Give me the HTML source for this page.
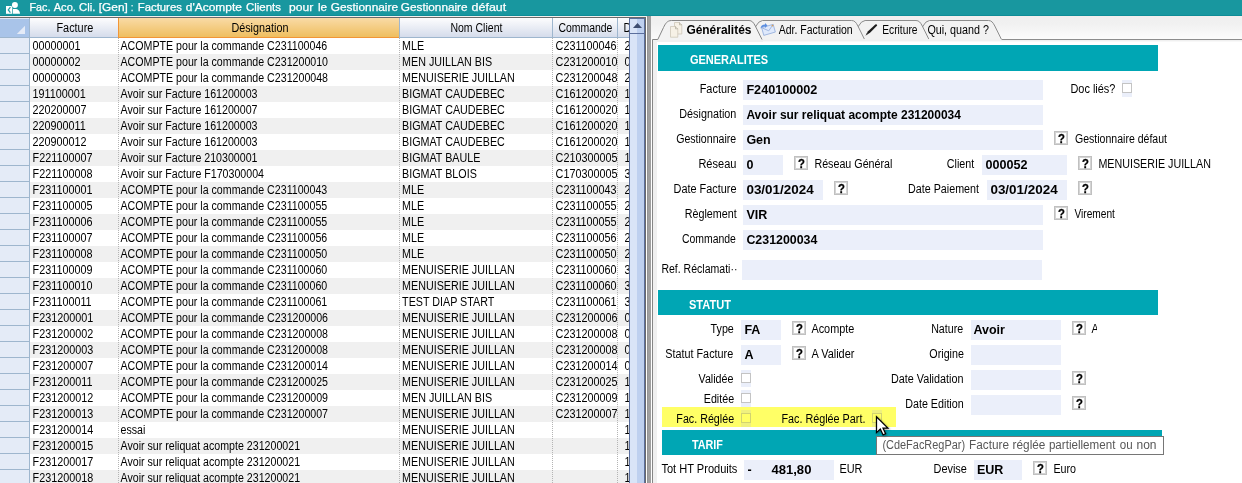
<!DOCTYPE html>
<html lang="fr"><head><meta charset="utf-8"><title>Fac. Aco. Cli.</title>
<style>
*{box-sizing:border-box;margin:0;padding:0}
html,body{width:1242px;height:483px;overflow:hidden;background:#fff}
body{position:relative;font-family:"Liberation Sans",sans-serif;font-size:12.5px;color:#000;line-height:16px}
.abs,.r,.f,.l,.q,.t,.b,.w,.cb,.h,.hd{position:absolute}
#title{left:0;top:0;width:1242px;height:16px;background:#18979f;border-bottom:1px solid #0e8c97;color:#fff;font-size:11.5px;line-height:16px;white-space:pre}
.tp{position:absolute;color:#575757;white-space:pre;transform-origin:0 0;height:16px}
.tt{position:absolute;color:#fff;font-size:11.5px;white-space:pre;transform-origin:0 0;height:16px;-webkit-text-stroke:.25px #fff}
/* text primitives */
.t,.b,.w{white-space:pre;transform-origin:0 0;height:16px}
.l{white-space:pre;transform-origin:100% 0;height:16px;text-align:right}
.b,.w{font-weight:bold}
.w{color:#fff}
/* grid */
.hd{top:18px;height:20px;background:linear-gradient(#fdfdfe,#d5dceb);border-bottom:1px solid #9eb6ce}
.hd.sel{background:linear-gradient(#f9dba6,#efbe5f);border-left:1px solid #f29536;border-bottom:1px solid #f29536}
.hb{position:absolute;top:18px;width:1px;height:20px;background:#9eb6ce}
.r{left:0;width:630px;height:16px;background:#fff}
.r.g{background:#f0f0f0}
.r .t{top:0}
.r .c1{left:32px;transform:translate(.6px,-.33px) scaleX(.8631)}.r .c2{left:120px;transform:translate(.5px,-.33px) scaleX(.851)}.r .c3{left:402px;transform:translate(.1px,-.33px) scaleX(.858)}.r .c4{left:555px;transform:translate(.6px,-.33px) scaleX(.8631)}.r .c5{left:624px;transform:translate(.6px,-.33px) scaleX(.8631)}
.vl{position:absolute;top:38px;width:1px;height:445px;background:repeating-linear-gradient(#b4b4b4 0 1px,rgba(255,255,255,0) 1px 2px)}
/* right */
#rp{left:651px;top:16px;width:591px;height:24px;background:linear-gradient(#f3eeec 0,#f3eeec 1px,#efefef 1px,#f1f1f1 8px,#fbfbfb 23px)}
.h{background:#00a6b4}
.f{background:#ebeffa;height:20px}
.q{width:14px;height:14px;border:1px solid #c0c0c0;box-shadow:inset 0 0 0 1px #d4d4d4;background:#fff}
.q::after{content:"?";position:absolute;left:3px;top:-2px;font-weight:bold;font-size:12.5px;line-height:16px;transform:translate(0,.5px) scaleX(.9);transform-origin:0 0;-webkit-text-stroke:.3px #000}
.cb{width:10px;height:17px;background:#ebeffa}
.cb i{position:absolute;left:0;top:3px;width:10px;height:10px;border:1px solid #c4c4c4;background:#fff}
</style></head><body><div id="app" style="position:absolute;left:0;top:0;width:1242px;height:483px;will-change:transform">
<div id="title" class="abs"></div>
<svg class="abs" style="left:0;top:0" width="24" height="16"><rect x="6" y="6" width="6.3" height="7.8" fill="#fff"/><path d="M10.4 7.2 L8.3 9.9 L10.4 12.6" stroke="#2aa0a8" stroke-width="1.3" fill="none"/><path d="M13 13.8 V9.1 H16.2 Q19.6 9.6 20 13.8Z" fill="#fff"/><circle cx="14.9" cy="4.9" r="3.4" fill="#18979f"/><circle cx="14.9" cy="4.9" r="3" fill="#fff"/></svg>
<div class="abs" style="left:0;top:16px;width:651px;height:1px;background:#f3eeec"></div>
<div class="abs" style="left:0;top:17px;width:646px;height:1px;background:#696969"></div>
<!-- header -->
<div class="hd" style="left:0;width:29px;background:#a9c4e9;border-top:1px solid #dfe9f9"></div>
<svg class="abs" style="left:16px;top:25px" width="10" height="10"><path d="M9 0.8 V9 H0.8Z" fill="#e4ebf7"/></svg>
<div class="hd" style="left:30px;width:88px"></div>
<div class="hd sel" style="left:118px;width:281px"></div>
<div class="hd" style="left:400px;width:152px"></div>
<div class="hd" style="left:553px;width:64px"></div>
<div class="hd" style="left:618px;width:11px"></div>
<div class="hb" style="left:29px"></div><div class="hb" style="left:399px"></div><div class="hb" style="left:552px"></div><div class="hb" style="left:617px"></div>
<div class="t" style="left:623px;top:19px;transform:translate(.4px,.67px) scaleX(.857)">D</div>
<div class="r" style="top:38px"><span class="t c1">00000001</span><span class="t c2">ACOMPTE pour la commande C231100046</span><span class="t c3">MLE</span><span class="t c4">C231100046</span><span class="t c5">2</span></div>
<div class="r g" style="top:54px"><span class="t c1">00000002</span><span class="t c2">ACOMPTE pour la commande C231200010</span><span class="t c3">MEN JUILLAN BIS</span><span class="t c4">C231200010</span><span class="t c5">0</span></div>
<div class="r" style="top:70px"><span class="t c1">00000003</span><span class="t c2">ACOMPTE pour la commande C231200048</span><span class="t c3">MENUISERIE JUILLAN</span><span class="t c4">C231200048</span><span class="t c5">2</span></div>
<div class="r g" style="top:86px"><span class="t c1">191100001</span><span class="t c2">Avoir sur Facture 161200003</span><span class="t c3">BIGMAT CAUDEBEC</span><span class="t c4">C161200020</span><span class="t c5">1</span></div>
<div class="r" style="top:102px"><span class="t c1">220200007</span><span class="t c2">Avoir sur Facture 161200007</span><span class="t c3">BIGMAT CAUDEBEC</span><span class="t c4">C161200020</span><span class="t c5">1</span></div>
<div class="r g" style="top:118px"><span class="t c1">220900011</span><span class="t c2">Avoir sur Facture 161200003</span><span class="t c3">BIGMAT CAUDEBEC</span><span class="t c4">C161200020</span><span class="t c5">1</span></div>
<div class="r" style="top:134px"><span class="t c1">220900012</span><span class="t c2">Avoir sur Facture 161200003</span><span class="t c3">BIGMAT CAUDEBEC</span><span class="t c4">C161200020</span><span class="t c5">1</span></div>
<div class="r g" style="top:150px"><span class="t c1">F221100007</span><span class="t c2">Avoir sur Facture 210300001</span><span class="t c3">BIGMAT BAULE</span><span class="t c4">C210300005</span><span class="t c5">1</span></div>
<div class="r" style="top:166px"><span class="t c1">F221100008</span><span class="t c2">Avoir sur Facture F170300004</span><span class="t c3">BIGMAT BLOIS</span><span class="t c4">C170300005</span><span class="t c5">3</span></div>
<div class="r g" style="top:182px"><span class="t c1">F231100001</span><span class="t c2">ACOMPTE pour la commande C231100043</span><span class="t c3">MLE</span><span class="t c4">C231100043</span><span class="t c5">2</span></div>
<div class="r" style="top:198px"><span class="t c1">F231100005</span><span class="t c2">ACOMPTE pour la commande C231100055</span><span class="t c3">MLE</span><span class="t c4">C231100055</span><span class="t c5">2</span></div>
<div class="r g" style="top:214px"><span class="t c1">F231100006</span><span class="t c2">ACOMPTE pour la commande C231100055</span><span class="t c3">MLE</span><span class="t c4">C231100055</span><span class="t c5">2</span></div>
<div class="r" style="top:230px"><span class="t c1">F231100007</span><span class="t c2">ACOMPTE pour la commande C231100056</span><span class="t c3">MLE</span><span class="t c4">C231100056</span><span class="t c5">2</span></div>
<div class="r g" style="top:246px"><span class="t c1">F231100008</span><span class="t c2">ACOMPTE pour la commande C231100050</span><span class="t c3">MLE</span><span class="t c4">C231100050</span><span class="t c5">2</span></div>
<div class="r" style="top:262px"><span class="t c1">F231100009</span><span class="t c2">ACOMPTE pour la commande C231100060</span><span class="t c3">MENUISERIE JUILLAN</span><span class="t c4">C231100060</span><span class="t c5">3</span></div>
<div class="r g" style="top:278px"><span class="t c1">F231100010</span><span class="t c2">ACOMPTE pour la commande C231100060</span><span class="t c3">MENUISERIE JUILLAN</span><span class="t c4">C231100060</span><span class="t c5">3</span></div>
<div class="r" style="top:294px"><span class="t c1">F231100011</span><span class="t c2">ACOMPTE pour la commande C231100061</span><span class="t c3">TEST DIAP START</span><span class="t c4">C231100061</span><span class="t c5">3</span></div>
<div class="r g" style="top:310px"><span class="t c1">F231200001</span><span class="t c2">ACOMPTE pour la commande C231200006</span><span class="t c3">MENUISERIE JUILLAN</span><span class="t c4">C231200006</span><span class="t c5">0</span></div>
<div class="r" style="top:326px"><span class="t c1">F231200002</span><span class="t c2">ACOMPTE pour la commande C231200008</span><span class="t c3">MENUISERIE JUILLAN</span><span class="t c4">C231200008</span><span class="t c5">0</span></div>
<div class="r g" style="top:342px"><span class="t c1">F231200003</span><span class="t c2">ACOMPTE pour la commande C231200008</span><span class="t c3">MENUISERIE JUILLAN</span><span class="t c4">C231200008</span><span class="t c5">0</span></div>
<div class="r" style="top:358px"><span class="t c1">F231200007</span><span class="t c2">ACOMPTE pour la commande C231200014</span><span class="t c3">MENUISERIE JUILLAN</span><span class="t c4">C231200014</span><span class="t c5">0</span></div>
<div class="r g" style="top:374px"><span class="t c1">F231200011</span><span class="t c2">ACOMPTE pour la commande C231200025</span><span class="t c3">MENUISERIE JUILLAN</span><span class="t c4">C231200025</span><span class="t c5">1</span></div>
<div class="r" style="top:390px"><span class="t c1">F231200012</span><span class="t c2">ACOMPTE pour la commande C231200009</span><span class="t c3">MEN JUILLAN BIS</span><span class="t c4">C231200009</span><span class="t c5">1</span></div>
<div class="r g" style="top:406px"><span class="t c1">F231200013</span><span class="t c2">ACOMPTE pour la commande C231200007</span><span class="t c3">MENUISERIE JUILLAN</span><span class="t c4">C231200007</span><span class="t c5">1</span></div>
<div class="r" style="top:422px"><span class="t c1">F231200014</span><span class="t c2">essai</span><span class="t c3">MENUISERIE JUILLAN</span><span class="t c5">1</span></div>
<div class="r g" style="top:438px"><span class="t c1">F231200015</span><span class="t c2">Avoir sur reliquat acompte 231200021</span><span class="t c3">MENUISERIE JUILLAN</span><span class="t c5">1</span></div>
<div class="r" style="top:454px"><span class="t c1">F231200017</span><span class="t c2">Avoir sur reliquat acompte 231200021</span><span class="t c3">MENUISERIE JUILLAN</span><span class="t c5">1</span></div>
<div class="r g" style="top:470px"><span class="t c1">F231200018</span><span class="t c2">Avoir sur reliquat acompte 231200021</span><span class="t c3">MENUISERIE JUILLAN</span><span class="t c5">1</span></div>
<div class="abs" style="left:0;top:38px;width:30px;height:445px;border-right:1px solid #9eb6ce;background:repeating-linear-gradient(#e4ebf7 0 15px,#9eb6ce 15px 16px)"></div>
<div class="vl" style="left:118px"></div><div class="vl" style="left:399px"></div><div class="vl" style="left:552px"></div><div class="vl" style="left:617px"></div>
<!-- scrollbar -->
<div class="abs" style="left:629px;top:18px;width:16px;height:465px;background:linear-gradient(90deg,#d9e4f7 0,#d9e4f7 7px,#bed0ef 7px);border-left:1px solid #5b6f9d;border-right:1px solid #5b6f9d"></div>
<div class="abs" style="left:629px;top:33px;width:16px;height:1px;background:#5b6f9d"></div><div class="abs" style="left:629px;top:18px;width:16px;height:1px;background:#5b6f9d"></div>
<svg class="abs" style="left:632px;top:22px" width="11" height="7"><path d="M1 6 L5.5 1 L10 6Z" fill="#3f4e70"/></svg>
<div class="abs" style="left:645px;top:17px;width:1px;height:466px;background:#696969"></div>
<div class="abs" style="left:646px;top:17px;width:1px;height:466px;background:#fff"></div>
<div class="abs" style="left:647px;top:16px;width:4px;height:467px;background:linear-gradient(90deg,#8e8e8e,#a0a0a0 1.5px,#a0a0a0)"></div>
<!-- right panel -->
<div id="rp" class="abs"></div>
<div class="abs" style="left:652px;top:40px;width:590px;height:443px;background:#f0f0f0"></div>
<div class="abs" style="left:657px;top:42px;width:585px;height:441px;background:#fff"></div>
<div class="abs" style="left:653px;top:41px;width:589px;height:1px;background:#f8f8f8"></div>
<svg class="abs" style="left:651px;top:16px" width="591" height="467">
<g fill="#f2f2f2" stroke="#8c8c8c" stroke-width="1">
<path d="M350.5 23.5 L343.8 10 C342.0 6.5 340.5 4.5 337.5 4.5 H278.5 Q274.5 5 272.0 10 L265.5 23.5Z"/>
<path d="M278.0 23.5 L271.3 10 C269.5 6.5 268.0 4.5 265.0 4.5 H214.1 Q210.1 5 207.6 10 L201.1 23.5Z"/>
<path d="M213.6 23.5 L206.9 10 C205.1 6.5 203.6 4.5 200.6 4.5 H111.5 Q107.5 5 105.0 10 L98.5 23.5Z"/>
</g>
<rect x="100" y="23" width="252" height="1.6" fill="#f1f1f1"/>
<path d="M1.5 23.5 H6.8 L12.5 11.5 C14.3 7.8 16 4.6 20.5 4.5 H98 C101 4.5 102.5 6.5 104.3 10 L111 23.5 V24 H1.5Z" fill="#f3f3f3" stroke="none"/>
<rect x="2" y="24" width="110" height="2" fill="#f0f0f0"/><rect x="6" y="26" width="106" height="1" fill="#fff"/>
<path d="M1.5 467 V23.5 H6.8 L12.5 11.5 C14.3 7.8 16 4.6 20.5 4.5 H98 C101 4.5 102.5 6.5 104.3 10 L111 23.5" fill="none" stroke="#868686"/>
<path d="M350.5 23.5 H591" fill="none" stroke="#8c8c8c"/>
</svg>
<!-- tab icons -->
<svg class="abs" style="left:668px;top:21px" width="16" height="18"><g stroke="#c9c2b2" stroke-width=".7" fill="#f6f1e6"><path d="M6.5 1.5 H11.5 L13.8 3.8 V13 H6.5Z"/><path d="M2.5 5.5 H7.5 L9.8 7.8 V16.2 H2.5Z"/></g><path d="M11.5 1.5 V3.8 H13.8 M7.5 5.5 V7.8 H9.8" stroke="#a9a393" stroke-width=".7" fill="none"/></svg>
<svg class="abs" style="left:759px;top:22px" width="18" height="15"><g transform="rotate(-16 9 8)"><rect x="3.5" y="4" width="12" height="8" fill="#dfe9fb" stroke="#9fb6e0" stroke-width=".9"/><path d="M3.5 4 L9.5 9 L15.5 4" fill="none" stroke="#9fb6e0" stroke-width=".9"/></g><path d="M1.5 6.5 Q2 2.5 6 2.5 V1 L8.5 3.5 L6 6 V4.5 Q3.5 4.5 1.5 6.5Z" fill="#5d8fe0"/><circle cx="13.5" cy="3.6" r=".9" fill="#e0a050"/></svg>
<svg class="abs" style="left:864px;top:23px" width="15" height="14"><path d="M1.6 12.4 L4 8.2 L11.3 1.4 Q12.8 0.9 13.2 2.4 L6 9.8Z" fill="#1c1c1c"/><path d="M1.6 12.4 L2.9 10.1 L3.9 11.1Z" fill="#555"/></svg>
<!-- section headers -->
<div class="h" style="left:658px;top:45px;width:500px;height:26px"></div>
<div class="h" style="left:658px;top:290px;width:500px;height:25px"></div>
<div class="h" style="left:662px;top:430px;width:500px;height:25px"></div>
<!-- fields -->
<div class="f" style="left:743px;top:80px;width:300px"></div>
<div class="f" style="left:743px;top:105px;width:300px"></div>
<div class="f" style="left:743px;top:130px;width:300px"></div>
<div class="f" style="left:743px;top:155px;width:40px"></div>
<div class="f" style="left:982px;top:155px;width:85px"></div>
<div class="f" style="left:743px;top:180px;width:80px"></div>
<div class="f" style="left:987px;top:180px;width:80px"></div>
<div class="f" style="left:743px;top:205px;width:300px"></div>
<div class="f" style="left:743px;top:230px;width:300px"></div>
<div class="f" style="left:742px;top:260px;width:300px"></div>
<div class="f" style="left:741px;top:320px;width:40px"></div>
<div class="f" style="left:971px;top:320px;width:90px"></div>
<div class="f" style="left:741px;top:345px;width:40px"></div>
<div class="f" style="left:971px;top:345px;width:90px"></div>
<div class="f" style="left:971px;top:370px;width:90px"></div>
<div class="f" style="left:971px;top:395px;width:90px"></div>
<div class="f" style="left:744px;top:460px;width:90px"></div>
<div class="f" style="left:974px;top:460px;width:48px"></div>
<!-- checkboxes -->
<div class="cb" style="left:1122px;top:80px"><i></i></div>
<div class="cb" style="left:741px;top:370px"><i></i></div>
<div class="cb" style="left:741px;top:390px"><i></i></div>
<div class="abs" style="left:662px;top:407px;width:234px;height:20px;background:#ffff66"></div>
<div class="cb" style="left:741px;top:410px;background:#eff07e"><i style="background:#ffff66;border-color:#d2d370"></i></div>
<div class="cb" style="left:872px;top:410px;background:#eff07e"><i style="background:#ffff66;border-color:#d2d370"></i></div>
<!-- ? buttons -->
<div class="q" style="left:1054px;top:131px"></div>
<div class="q" style="left:794px;top:156px"></div>
<div class="q" style="left:1078px;top:156px"></div>
<div class="q" style="left:834px;top:181px"></div>
<div class="q" style="left:1078px;top:181px"></div>
<div class="q" style="left:1054px;top:206px"></div>
<div class="q" style="left:792px;top:321px"></div>
<div class="q" style="left:1072px;top:321px"></div>
<div class="q" style="left:792px;top:346px"></div>
<div class="q" style="left:1072px;top:371px"></div>
<div class="q" style="left:1072px;top:396px"></div>
<div class="q" style="left:1033px;top:461px"></div>
<div class="abs" style="left:1090px;top:320px;width:6.6px;height:20px;overflow:hidden"><div class="t" style="left:1px;top:0;transform:translate(.6px,.67px) scaleX(.857)">A</div></div>
<div class="abs" style="left:876px;top:436px;width:288px;height:19px;background:#fff;border:1px solid #767676"></div>
<div class="t" style="left:56px;top:19px;transform:translate(0.40px,0.67px) scaleX(0.8728)">Facture</div>
<div class="t" style="left:231px;top:19px;transform:translate(0.40px,0.67px) scaleX(0.8634)">Désignation</div>
<div class="t" style="left:450px;top:19px;transform:translate(0.40px,0.67px) scaleX(0.8410)">Nom Client</div>
<div class="t" style="left:558px;top:19px;transform:translate(0.40px,0.67px) scaleX(0.8356)">Commande</div>
<div class="b" style="left:686px;top:21px;transform:translate(0.40px,0.67px) scaleX(0.9546)">Généralités</div>
<div class="t" style="left:778px;top:21px;transform:translate(0.70px,0.67px) scaleX(0.8385)">Adr. Facturation</div>
<div class="t" style="left:882px;top:21px;transform:translate(0.20px,0.67px) scaleX(0.8194)">Ecriture</div>
<div class="t" style="left:927px;top:21px;transform:translate(0.40px,0.67px) scaleX(0.8590)">Qui, quand ?</div>
<div class="l" style="right:505px;top:80px;transform:translate(-0.70px,0.67px) scaleX(0.8728)">Facture</div>
<div class="b" style="left:746px;top:81px;transform:translate(0.40px,0.67px) scaleX(1.0114)">F240100002</div>
<div class="t" style="left:1070px;top:80px;transform:translate(0.40px,0.67px) scaleX(0.8751)">Doc liés?</div>
<div class="l" style="right:505px;top:105px;transform:translate(-0.70px,0.67px) scaleX(0.8634)">Désignation</div>
<div class="b" style="left:746px;top:106px;transform:translate(0.40px,0.67px) scaleX(0.9578)">Avoir sur reliquat acompte 231200034</div>
<div class="l" style="right:505px;top:130px;transform:translate(-0.70px,0.67px) scaleX(0.8466)">Gestionnaire</div>
<div class="b" style="left:746px;top:131px;transform:translate(0.40px,0.67px) scaleX(1.0000)">Gen</div>
<div class="t" style="left:1075px;top:130px;transform:translate(0.00px,0.67px) scaleX(0.8432)">Gestionnaire défaut</div>
<div class="l" style="right:505px;top:155px;transform:translate(-0.70px,0.67px) scaleX(0.8818)">Réseau</div>
<div class="b" style="left:746px;top:156px;transform:translate(0.40px,0.67px) scaleX(1.0000)">0</div>
<div class="t" style="left:814px;top:155px;transform:translate(0.40px,0.67px) scaleX(0.8570)">Réseau Général</div>
<div class="l" style="right:267px;top:155px;transform:translate(-0.70px,0.67px) scaleX(0.8570)">Client</div>
<div class="b" style="left:985px;top:156px;transform:translate(0.40px,0.67px) scaleX(1.0067)">000052</div>
<div class="t" style="left:1098px;top:155px;transform:translate(0.40px,0.67px) scaleX(0.8570)">MENUISERIE JUILLAN</div>
<div class="l" style="right:505px;top:180px;transform:translate(-0.70px,0.67px) scaleX(0.8718)">Date Facture</div>
<div class="b" style="left:746px;top:181px;transform:translate(0.40px,0.67px) scaleX(1.0757)">03/01/2024</div>
<div class="l" style="right:262px;top:180px;transform:translate(-0.70px,0.67px) scaleX(0.8570)">Date Paiement</div>
<div class="b" style="left:990px;top:181px;transform:translate(0.40px,0.67px) scaleX(1.0757)">03/01/2024</div>
<div class="l" style="right:505px;top:205px;transform:translate(-0.70px,0.67px) scaleX(0.8602)">Règlement</div>
<div class="b" style="left:746px;top:206px;transform:translate(0.40px,0.67px) scaleX(1.0000)">VIR</div>
<div class="t" style="left:1074px;top:205px;transform:translate(0.40px,0.67px) scaleX(0.8133)">Virement</div>
<div class="l" style="right:505px;top:230px;transform:translate(-0.70px,0.67px) scaleX(0.8356)">Commande</div>
<div class="b" style="left:746px;top:231px;transform:translate(0.40px,0.67px) scaleX(0.9915)">C231200034</div>
<div class="t" style="left:661px;top:260px;transform:translate(0.40px,0.67px) scaleX(0.8417)">Ref. Réclamati··</div>
<div class="l" style="right:508px;top:320px;transform:translate(-0.30px,0.67px) scaleX(0.8570)">Type</div>
<div class="b" style="left:744px;top:321px;transform:translate(0.40px,0.67px) scaleX(1.0000)">FA</div>
<div class="t" style="left:811px;top:320px;transform:translate(0.40px,0.67px) scaleX(0.8714)">Acompte</div>
<div class="l" style="right:278px;top:320px;transform:translate(-0.40px,0.67px) scaleX(0.8526)">Nature</div>
<div class="b" style="left:973px;top:321px;transform:translate(0.40px,0.67px) scaleX(1.0000)">Avoir</div>
<div class="l" style="right:508px;top:345px;transform:translate(-0.30px,0.67px) scaleX(0.8661)">Statut Facture</div>
<div class="b" style="left:744px;top:346px;transform:translate(0.40px,0.67px) scaleX(1.0000)">A</div>
<div class="t" style="left:811px;top:345px;transform:translate(0.40px,0.67px) scaleX(0.8756)">A Valider</div>
<div class="l" style="right:278px;top:345px;transform:translate(-0.40px,0.67px) scaleX(0.8570)">Origine</div>
<div class="l" style="right:508px;top:370px;transform:translate(-0.30px,0.67px) scaleX(0.8570)">Validée</div>
<div class="l" style="right:278px;top:370px;transform:translate(-0.40px,0.67px) scaleX(0.8645)">Date Validation</div>
<div class="l" style="right:508px;top:390px;transform:translate(-0.30px,0.67px) scaleX(0.8570)">Editée</div>
<div class="l" style="right:278px;top:395px;transform:translate(-0.40px,0.67px) scaleX(0.8589)">Date Edition</div>
<div class="l" style="right:508px;top:410px;transform:translate(-0.30px,0.67px) scaleX(0.8570)">Fac. Réglée</div>
<div class="t" style="left:781px;top:410px;transform:translate(0.40px,0.67px) scaleX(0.8636)">Fac. Réglée Part.</div>
<div class="t" style="left:661px;top:460px;transform:translate(0.40px,0.67px) scaleX(0.8845)">Tot HT Produits</div>
<div class="b" style="left:747px;top:461px;transform:translate(0.40px,0.67px) scaleX(1.0000)">-</div>
<div class="b" style="left:771px;top:461px;transform:translate(0.40px,0.67px) scaleX(1.0462)">481,80</div>
<div class="t" style="left:839px;top:460px;transform:translate(0.40px,0.67px) scaleX(0.8710)">EUR</div>
<div class="l" style="right:275px;top:460px;transform:translate(-0.30px,0.67px) scaleX(0.8739)">Devise</div>
<div class="b" style="left:976px;top:461px;transform:translate(0.90px,0.67px) scaleX(1.0036)">EUR</div>
<div class="t" style="left:1053px;top:460px;transform:translate(0.40px,0.67px) scaleX(0.8570)">Euro</div>
<div class="w" style="left:689px;top:51px;transform:translate(0.90px,0.67px) scaleX(0.8807)">GENERALITES</div>
<div class="w" style="left:688px;top:296px;transform:translate(0.90px,0.67px) scaleX(0.8851)">STATUT</div>
<div class="w" style="left:691px;top:436px;transform:translate(0.90px,0.67px) scaleX(0.8641)">TARIF</div>
<div class="tt" style="left:29px;top:-1px;transform:translate(0.50px,0.02px) scaleX(0.9341)">Fac.</div>
<div class="tt" style="left:53px;top:-1px;transform:translate(0.70px,0.02px) scaleX(0.9646)">Aco.</div>
<div class="tt" style="left:79px;top:-1px;transform:translate(0.10px,0.02px) scaleX(0.9865)">Cli.</div>
<div class="tt" style="left:98px;top:-1px;transform:translate(0.80px,0.02px) scaleX(1.0305)">[Gen]</div>
<div class="tt" style="left:131px;top:-1px;transform:translate(0.00px,0.02px) scaleX(0.6868)">:</div>
<div class="tt" style="left:137px;top:-1px;transform:translate(0.70px,0.02px) scaleX(0.9877)">Factures</div>
<div class="tt" style="left:185px;top:-1px;transform:translate(0.80px,0.02px) scaleX(1.0410)">d'Acompte</div>
<div class="tt" style="left:246px;top:-1px;transform:translate(0.00px,0.02px) scaleX(0.9956)">Clients</div>
<div class="tt" style="left:289px;top:-1px;transform:translate(0.10px,0.02px) scaleX(1.0551)">pour</div>
<div class="tt" style="left:317px;top:-1px;transform:translate(0.90px,0.02px) scaleX(1.0164)">le</div>
<div class="tt" style="left:330px;top:-1px;transform:translate(0.80px,0.02px) scaleX(1.0304)">Gestionnaire</div>
<div class="tt" style="left:400px;top:-1px;transform:translate(0.80px,0.02px) scaleX(1.0242)">Gestionnaire</div>
<div class="tt" style="left:471px;top:-1px;transform:translate(0.60px,0.02px) scaleX(1.0818)">défaut</div>
<div class="tp" style="left:882px;top:436px;transform:translate(0.40px,0.67px) scaleX(0.8753)">(CdeFacRegPar)</div>
<div class="tp" style="left:969px;top:436px;transform:translate(0.10px,0.67px) scaleX(0.9436)">Facture</div>
<div class="tp" style="left:1012px;top:436px;transform:translate(0.60px,0.67px) scaleX(0.9439)">réglée</div>
<div class="tp" style="left:1048px;top:436px;transform:translate(0.90px,0.67px) scaleX(0.9291)">partiellement</div>
<div class="tp" style="left:1119px;top:436px;transform:translate(0.80px,0.67px) scaleX(0.9276)">ou</div>
<div class="tp" style="left:1136px;top:436px;transform:translate(0.50px,0.67px) scaleX(0.9588)">non</div>
<!-- tooltip -->
<!-- cursor -->
<svg class="abs" style="left:876px;top:416px;overflow:visible;filter:drop-shadow(1px 1px 1px rgba(0,0,0,.35))" width="13" height="20" viewBox="0 0 13 20"><path d="M0.5 0.7 V16.6 L4.3 13 L7.1 18.9 L9.6 17.8 L7 12 H11.9Z" fill="#fff" stroke="#000" stroke-width="1.25" stroke-linejoin="miter"/></svg>
</div></body></html>
